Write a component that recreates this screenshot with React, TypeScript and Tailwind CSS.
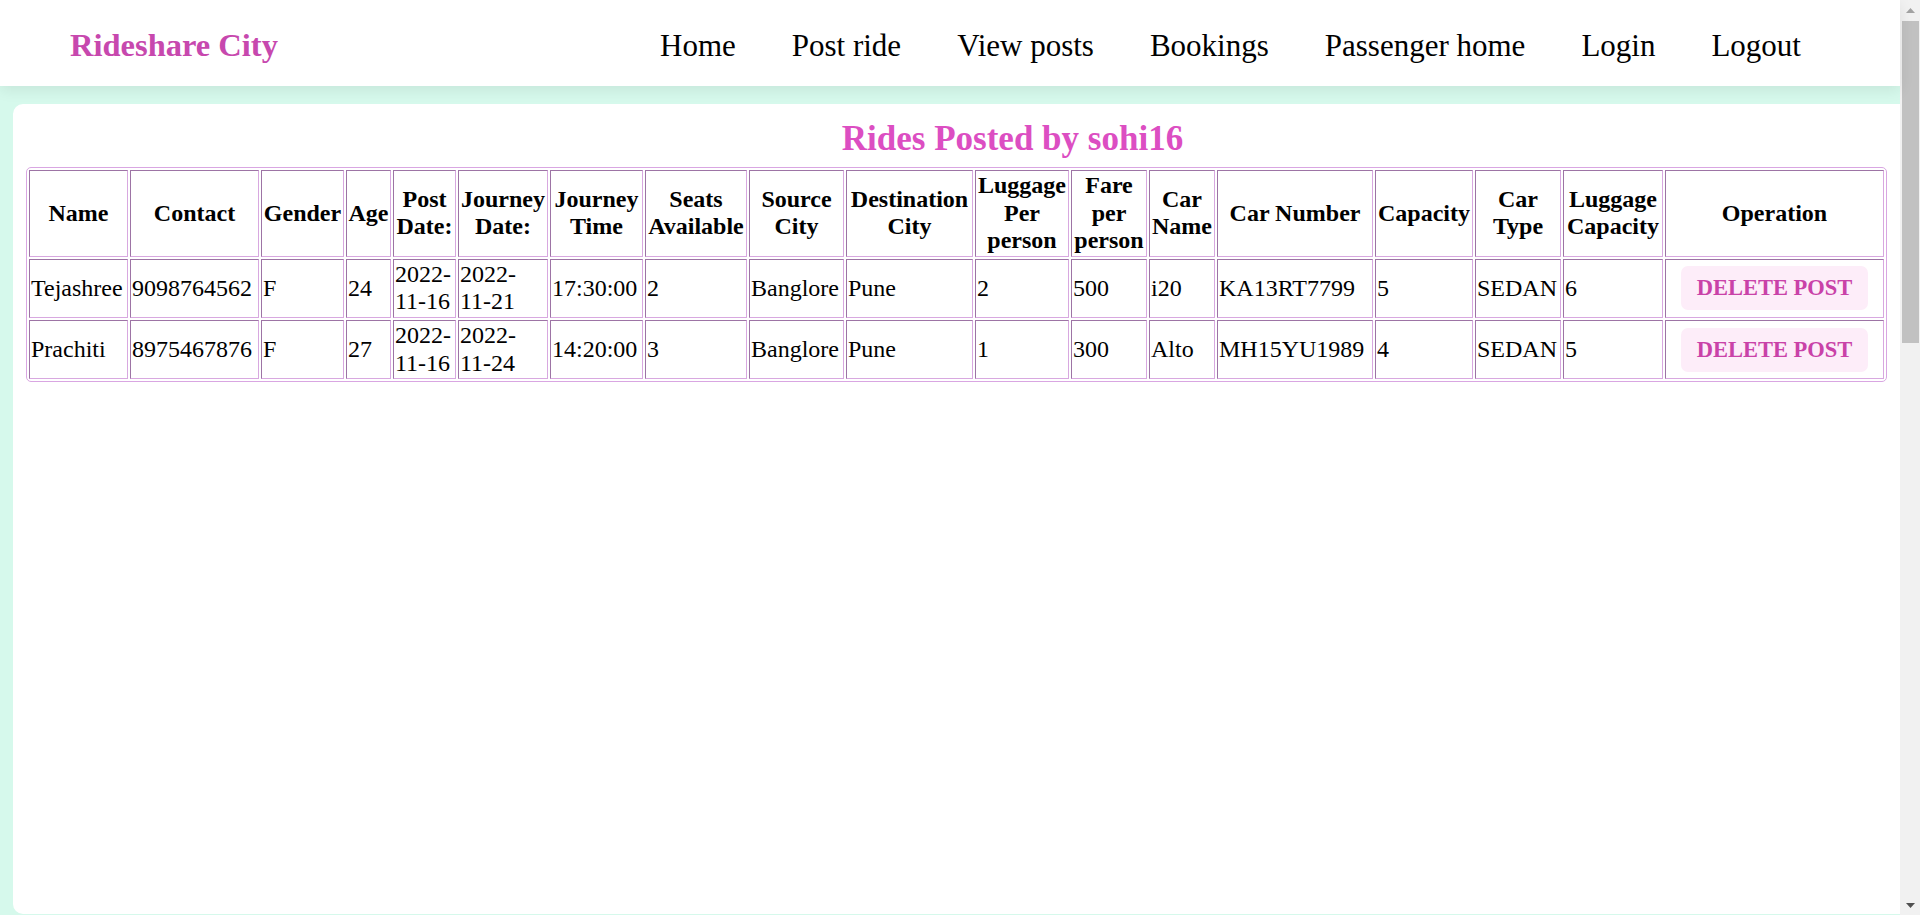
import React from "react";

interface Ride {
  name: string;
  contact: string;
  gender: string;
  age: string;
  postDate: string;
  journeyDate: string;
  journeyTime: string;
  seats: string;
  source: string;
  destination: string;
  luggagePer: string;
  fare: string;
  carName: string;
  carNumber: string;
  capacity: string;
  carType: string;
  luggageCapacity: string;
}

const rides: Ride[] = [
  {
    name: "Tejashree",
    contact: "9098764562",
    gender: "F",
    age: "24",
    postDate: "2022-11-16",
    journeyDate: "2022-11-21",
    journeyTime: "17:30:00",
    seats: "2",
    source: "Banglore",
    destination: "Pune",
    luggagePer: "2",
    fare: "500",
    carName: "i20",
    carNumber: "KA13RT7799",
    capacity: "5",
    carType: "SEDAN",
    luggageCapacity: "6",
  },
  {
    name: "Prachiti",
    contact: "8975467876",
    gender: "F",
    age: "27",
    postDate: "2022-11-16",
    journeyDate: "2022-11-24",
    journeyTime: "14:20:00",
    seats: "3",
    source: "Banglore",
    destination: "Pune",
    luggagePer: "1",
    fare: "300",
    carName: "Alto",
    carNumber: "MH15YU1989",
    capacity: "4",
    carType: "SEDAN",
    luggageCapacity: "5",
  },
];

// column widths measured off the design, operation takes the rest
const headers: { label: string; w: string }[] = [
  { label: "Name", w: "w-[99px]" },
  { label: "Contact", w: "w-[129px]" },
  { label: "Gender", w: "w-[83px]" },
  { label: "Age", w: "w-[45px]" },
  { label: "Post Date:", w: "w-[63px]" },
  { label: "Journey Date:", w: "w-[90px]" },
  { label: "Journey Time", w: "w-[93px]" },
  { label: "Seats Available", w: "w-[102px]" },
  { label: "Source City", w: "w-[95px]" },
  { label: "Destination City", w: "w-[127px]" },
  { label: "Luggage Per person", w: "w-[94px]" },
  { label: "Fare per person", w: "w-[76px]" },
  { label: "Car Name", w: "w-[66px]" },
  { label: "Car Number", w: "w-[156px]" },
  { label: "Capacity", w: "w-[98px]" },
  { label: "Car Type", w: "w-[86px]" },
  { label: "Luggage Capacity", w: "w-[100px]" },
  { label: "Operation", w: "" },
];

const fields: (keyof Ride)[] = [
  "name",
  "contact",
  "gender",
  "age",
  "postDate",
  "journeyDate",
  "journeyTime",
  "seats",
  "source",
  "destination",
  "luggagePer",
  "fare",
  "carName",
  "carNumber",
  "capacity",
  "carType",
  "luggageCapacity",
];

const navLinks = ["Home", "Post ride", "View posts", "Bookings", "Passenger home", "Login", "Logout"];

const cell = "border border-[#d8a8e0] border-t-[#9d74a5] border-l-[#9d74a5] p-px";

function ScrollTrack() {
  return (
    <div className="flex w-[20px] shrink-0 flex-col items-center bg-[#f1f1f1]">
      <div className="flex h-[20px] items-center justify-center">
        <svg width="9" height="5" viewBox="0 0 9 5">
          <path d="M0 5 L4.5 0 L9 5 Z" fill="#a3a3a3" />
        </svg>
      </div>
      <div className="mt-[1px] h-[322px] w-[17px] bg-[#c1c1c1]" />
      <div className="flex-1" />
      <div className="flex h-[20px] items-center justify-center">
        <svg width="9" height="5" viewBox="0 0 9 5">
          <path d="M0 0 L9 0 L4.5 5 Z" fill="#505050" />
        </svg>
      </div>
    </div>
  );
}

export default function App() {
  return (
    <div className="flex h-screen overflow-hidden bg-[#d6f9ec] font-['Liberation_Serif','Times_New_Roman',serif] leading-[1.15] text-black">
      <div className="min-w-0 flex-1">
        <nav className="relative z-10 flex h-[86px] items-center justify-between bg-white pl-[70px] pr-[99px] pt-[5px] shadow-[0_4px_14px_rgba(0,0,0,0.08)]">
          <a href="#" className="text-[32.5px] font-bold text-[#c748ae]">
            Rideshare City
          </a>
          <ul className="flex gap-[56px] text-[31px]">
            {navLinks.map((l) => (
              <li key={l}>
                <a href="#">{l}</a>
              </li>
            ))}
          </ul>
        </nav>

        <div className="ml-[13px] mt-[18px] h-[810px] rounded-l-[10px] bg-white px-[13px] pt-[15px]">
          <h2 className="mb-[8px] pl-[112px] text-center text-[35px] font-bold leading-[40px] text-[#dc4ec2]">
            Rides Posted by sohi16
          </h2>

          <table className="w-full table-fixed border-separate border-spacing-[2px] rounded-[5px] border border-[#d9a6e2] text-[24px] leading-[1.15]">
            <thead>
              <tr>
                {headers.map((h) => (
                  <th key={h.label} className={`${cell} ${h.w} text-center font-bold`}>
                    {h.label}
                  </th>
                ))}
              </tr>
            </thead>
            <tbody>
              {rides.map((r) => (
                <tr key={r.contact}>
                  {fields.map((f) => (
                    <td key={f} className={`${cell} text-left`}>
                      {r[f]}
                    </td>
                  ))}
                  <td className={`${cell} text-center`}>
                    <button className="whitespace-nowrap rounded-[7px] bg-[#fdedf9] px-[16px] py-[9px] text-[22.5px] font-bold leading-[1.15] text-[#c942a8]">
                      DELETE POST
                    </button>
                  </td>
                </tr>
              ))}
            </tbody>
          </table>
        </div>
      </div>
      <ScrollTrack />
    </div>
  );
}
